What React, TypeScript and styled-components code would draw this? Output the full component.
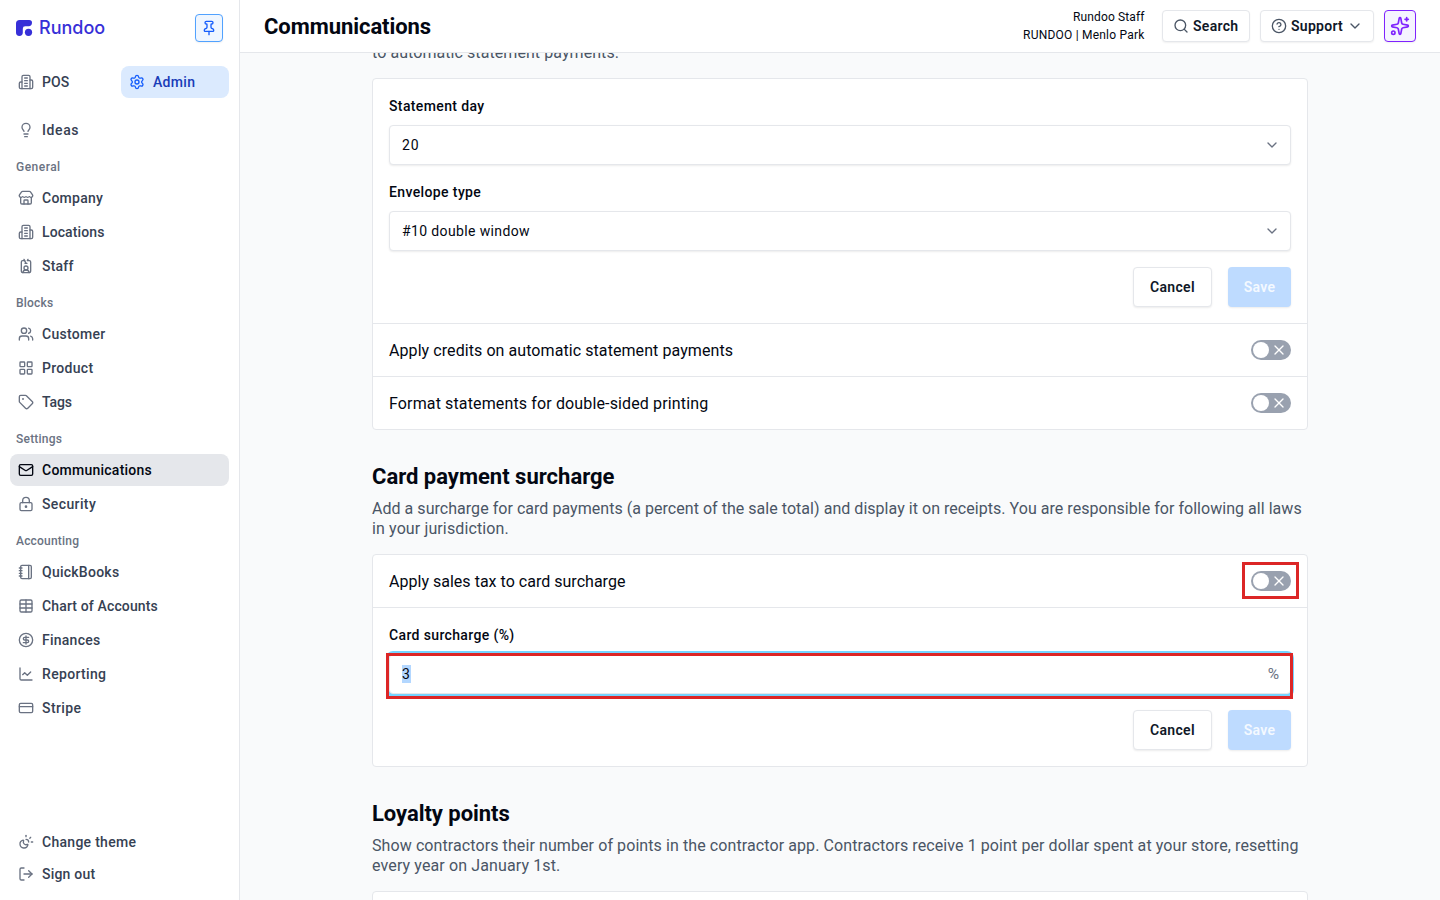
import React from "react";
import styled, { createGlobalStyle, css } from "styled-components";
import {
  ChartLine,
  ChevronDown,
  CircleDollarSign,
  CircleQuestionMark,
  CreditCard,
  IdCardLanyard,
  LayoutGrid,
  Lightbulb,
  LockKeyhole,
  LogOut,
  Mail,
  Notebook,
  Pin,
  Search,
  Settings,
  Sparkles,
  Store,
  SunMoon,
  Table,
  Tag,
  Users,
  X,
} from "lucide-react";

const GlobalStyle = createGlobalStyle`
  *, *::before, *::after { box-sizing: border-box; }
  html, body, #root { height: 100%; }
  body {
    margin: 0;
    overflow: hidden;
    font-family: Roboto, "Liberation Sans", sans-serif;
    font-size: 14px;
    color: #030712;
    background: #f9fafb;
  }
  h1, h2, p { margin: 0; }
  button, input { font: inherit; color: inherit; }
  svg { flex: none; display: block; }
`;

/* Text with its own tracking, in pixels. */
const Tracked = styled.span<{ $ls?: number }>`
  letter-spacing: ${(p) => p.$ls ?? 0}px;
  white-space: nowrap;
`;

const Shell = styled.div`
  display: flex;
  height: 900px;
  width: 1440px;
`;

/* ---------- sidebar ---------- */

const Sidebar = styled.aside`
  width: 240px;
  flex: none;
  display: flex;
  flex-direction: column;
  padding: 14px 10px 10px;
  background: #fff;
  border-right: 1px solid #e5e7eb;
`;

const Brand = styled.div`
  display: flex;
  align-items: center;
  justify-content: space-between;
  height: 28px;
  padding: 0 6px;
  margin-bottom: 24px;
`;

const Logo = styled.div`
  display: flex;
  align-items: center;
  gap: 6px;
  color: #3730d8;
  font-family: Inter, sans-serif;
  font-size: 18px;
  font-weight: 500;
  line-height: 28px;
`;

const PinButton = styled.button`
  display: grid;
  place-items: center;
  width: 28px;
  height: 28px;
  padding: 0;
  color: #155dfc;
  background: #eff6ff;
  border: 1px solid #51a2ff;
  border-radius: 4px;
  box-shadow: 0 1px 2px rgba(0, 0, 0, 0.06);
`;

const ModeSwitch = styled.div`
  display: grid;
  grid-template-columns: 1fr 108px;
  margin-bottom: 16px;
`;

type Tone = "plain" | "current" | "mode";

const NavItem = styled.a<{ $tone?: Tone }>`
  display: flex;
  align-items: center;
  gap: 8px;
  height: 32px;
  padding: 0 8px;
  border-radius: 8px;
  font-weight: 500;
  line-height: 20px;
  color: #364153;
  svg { color: #6a7282; }
  ${(p) =>
    p.$tone === "current" &&
    css`
      background: #e5e7eb;
      color: #030712;
      svg { color: #030712; }
    `}
  ${(p) =>
    p.$tone === "mode" &&
    css`
      background: #dbeafe;
      color: #193cb8;
      svg { color: #155dfc; }
    `}
`;

const NavGroup = styled.nav`
  display: flex;
  flex-direction: column;
  gap: 2px;
`;

const GroupLabel = styled.div`
  height: 36px;
  padding: 13px 6px 7px;
  font-size: 12px;
  font-weight: 500;
  line-height: 16px;
  color: #6a7282;
`;

const SidebarFooter = styled.div`
  margin-top: auto;
`;

/* ---------- header ---------- */

const Main = styled.main`
  flex: 1;
  min-width: 0;
  display: flex;
  flex-direction: column;
`;

const Header = styled.header`
  flex: none;
  display: flex;
  align-items: center;
  justify-content: space-between;
  height: 53px;
  padding: 0 24px;
  background: #fff;
  border-bottom: 1px solid #e5e7eb;
`;

const PageTitle = styled.h1`
  padding-top: 2px;
  font-size: 22px;
  font-weight: 700;
  line-height: 28px;
`;

const HeaderActions = styled.div`
  display: flex;
  align-items: center;
  gap: 10px;
`;

const Account = styled.div`
  display: flex;
  flex-direction: column;
  align-items: flex-end;
  margin-right: 7.5px;
  font-size: 12px;
  line-height: 18px;
`;

const HeaderButton = styled.button<{ $width: number; $accent?: boolean }>`
  display: flex;
  align-items: center;
  justify-content: ${(p) => (p.$accent ? "center" : "flex-start")};
  gap: 4px;
  width: ${(p) => p.$width}px;
  height: 32px;
  padding: ${(p) => (p.$accent ? 0 : "0 10px")};
  font-weight: 600;
  color: #101828;
  background: ${(p) => (p.$accent ? "#f5f3ff" : "#fff")};
  border: 1px solid ${(p) => (p.$accent ? "#7f22fe" : "#e5e7eb")};
  border-radius: 4px;
  box-shadow: 0 1px 2px rgba(0, 0, 0, 0.06);
  svg { color: ${(p) => (p.$accent ? "#7f22fe" : "#4a5565")}; }
  svg:last-child:not(:first-child) { margin-left: auto; margin-right: 1px; }
`;

/* ---------- content ---------- */

const Content = styled.div`
  flex: 1;
  min-height: 0;
  overflow: hidden;
`;

const Column = styled.div`
  width: 936px;
  margin: -10px auto 0;
  display: flex;
  flex-direction: column;
`;

const Section = styled.section`
  margin-bottom: 32px;
`;

const SectionTitle = styled.h2`
  margin-bottom: 8px;
  font-size: 22px;
  font-weight: 700;
  line-height: 29px;
`;

const Description = styled.p`
  margin-bottom: 15px;
  font-size: 16px;
  line-height: 20px;
  color: #4a5565;
  ${Tracked} { display: block; }
`;

const Card = styled.div`
  background: #fff;
  border: 1px solid #e5e7eb;
  border-radius: 4px;
  > * + * { border-top: 1px solid #e5e7eb; }
`;

const Form = styled.div`
  display: flex;
  flex-direction: column;
  gap: 16px;
  padding: 16px;
`;

const Field = styled.label`
  display: flex;
  flex-direction: column;
  gap: 8px;
  font-weight: 500;
  line-height: 22px;
`;

const Control = styled.div<{ $focused?: boolean }>`
  position: relative;
  display: flex;
  align-items: center;
  justify-content: space-between;
  height: 40px;
  padding: 0 10px 0 12px;
  font-weight: 400;
  line-height: 18px;
  background: #fff;
  border: 1px solid #e5e7eb;
  border-radius: 4px;
  box-shadow: ${(p) => (p.$focused ? "0 0 0 3px #74d4ff" : "0 1px 2px rgba(0, 0, 0, 0.08)")};
  svg { color: #6a7282; }
`;

const Selected = styled.span`
  width: 9px;
  background: #b3d7ff;
`;

const Suffix = styled.span`
  margin-right: 1px;
  font-size: 15.5px;
  color: #6a7282;
`;

const Buttons = styled.div`
  display: flex;
  justify-content: flex-end;
  gap: 16px;
`;

const Button = styled.button<{ $primary?: boolean }>`
  width: ${(p) => (p.$primary ? 63 : 79)}px;
  height: 40px;
  padding: 0;
  font-weight: 600;
  color: ${(p) => (p.$primary ? "rgba(255, 255, 255, 0.85)" : "#101828")};
  background: ${(p) => (p.$primary ? "#bedbff" : "#fff")};
  border: ${(p) => (p.$primary ? "none" : "1px solid #e5e7eb")};
  border-radius: 4px;
  box-shadow: 0 1px 2px rgba(0, 0, 0, 0.08);
`;

const ToggleRow = styled.div`
  display: flex;
  align-items: center;
  justify-content: space-between;
  height: 53px;
  padding: 0 16px;
  font-size: 16px;
  &:first-child { height: 52px; }
`;

const ToggleSlot = styled.div`
  position: relative;
`;

const Toggle = styled.div`
  display: flex;
  align-items: center;
  justify-content: space-between;
  width: 40px;
  height: 20px;
  padding: 0 4px 0 2px;
  border-radius: 10px;
  background: #99a1af;
  color: #fff;
`;

const Knob = styled.span`
  width: 16px;
  height: 16px;
  border-radius: 50%;
  background: #fff;
`;

/* Red outline laid over a control to call it out. */
const Callout = styled.span<{ $inset: string }>`
  position: absolute;
  inset: ${(p) => p.$inset};
  border: 3px solid #dc2626;
  pointer-events: none;
`;

const Building = () => (
  <svg width="16" height="16" viewBox="0 0 24 24" fill="none" stroke="currentColor" strokeWidth="2" strokeLinecap="round" strokeLinejoin="round">
    <path d="M6 22V4a2 2 0 0 1 2-2h8a2 2 0 0 1 2 2v18Z" />
    <path d="M6 12H4a2 2 0 0 0-2 2v6a2 2 0 0 0 2 2h2" />
    <path d="M18 9h2a2 2 0 0 1 2 2v9a2 2 0 0 1-2 2h-2" />
    <path d="M10 6h4M10 10h4M10 14h4M10 18h4" />
  </svg>
);

const LogoMark = () => (
  <svg width="17" height="16" viewBox="0 0 17 16" fill="currentColor">
    <path d="M3.600 0h9.600a2.800 2.800 0 0 1 2.800 2.800c0 2.200-1.300 3.500-3.300 3.500H9.200a2.400 2.400 0 0 0-2.400 2.400v3.900A3.400 3.400 0 0 1 0 12.600V3.600A3.600 3.600 0 0 1 3.600 0Z" />
    <circle cx="12.500" cy="12.300" r="3.600" />
  </svg>
);

type IconType = React.ComponentType<{ size?: number }>;
type Item = { icon: IconType; label: string; ls: number; tone?: Tone };

const groups: { label: string; ls: number; items: Item[] }[] = [
  {
    label: "General",
    ls: 0.48,
    items: [
      { icon: Store, label: "Company", ls: 0.27 },
      { icon: Building, label: "Locations", ls: 0.1 },
      { icon: IdCardLanyard, label: "Staff", ls: 0.2 },
    ],
  },
  {
    label: "Blocks",
    ls: 0.22,
    items: [
      { icon: Users, label: "Customer", ls: 0.27 },
      { icon: LayoutGrid, label: "Product", ls: 0.3 },
      { icon: Tag, label: "Tags", ls: -0.08 },
    ],
  },
  {
    label: "Settings",
    ls: 0.22,
    items: [
      { icon: Mail, label: "Communications", ls: 0.24, tone: "current" },
      { icon: LockKeyhole, label: "Security", ls: 0.38 },
    ],
  },
  {
    label: "Accounting",
    ls: 0.2,
    items: [
      { icon: Notebook, label: "QuickBooks", ls: 0.25 },
      { icon: Table, label: "Chart of Accounts", ls: 0.14 },
      { icon: CircleDollarSign, label: "Finances", ls: 0.25 },
      { icon: ChartLine, label: "Reporting", ls: 0.32 },
      { icon: CreditCard, label: "Stripe", ls: 0.4 },
    ],
  },
];

const NavLink = ({ icon: Icon, label, ls, tone }: Item) => (
  <NavItem $tone={tone}>
    <Icon size={16} />
    <Tracked $ls={ls}>{label}</Tracked>
  </NavItem>
);

const FormButtons = () => (
  <Buttons>
    <Button><Tracked $ls={0.32}>Cancel</Tracked></Button>
    <Button $primary><Tracked $ls={0.32}>Save</Tracked></Button>
  </Buttons>
);

const Switch = ({ marked }: { marked?: boolean }) => (
  <ToggleSlot>
    <Toggle>
      <Knob />
      <X size={16} />
    </Toggle>
    {marked && <Callout $inset="-9px -8px -8px -9px" />}
  </ToggleSlot>
);

export default function App() {
  return (
    <>
      <GlobalStyle />
      <Shell>
        <Sidebar>
          <Brand>
            <Logo>
              <LogoMark />
              <Tracked>Rundoo</Tracked>
            </Logo>
            <PinButton aria-label="Pin sidebar"><Pin size={16} /></PinButton>
          </Brand>
          <ModeSwitch>
            <NavLink icon={Building} label="POS" ls={0.1} />
            <NavLink icon={Settings} label="Admin" ls={0.3} tone="mode" />
          </ModeSwitch>
          <NavLink icon={Lightbulb} label="Ideas" ls={0.6} />
          {groups.map((g) => (
            <React.Fragment key={g.label}>
              <GroupLabel><Tracked $ls={g.ls}>{g.label}</Tracked></GroupLabel>
              <NavGroup>
                {g.items.map((item) => <NavLink key={item.label} {...item} />)}
              </NavGroup>
            </React.Fragment>
          ))}
          <SidebarFooter>
            <NavLink icon={SunMoon} label="Change theme" ls={0.28} />
            <NavLink icon={LogOut} label="Sign out" ls={0.2} />
          </SidebarFooter>
        </Sidebar>

        <Main>
          <Header>
            <PageTitle><Tracked $ls={-0.06}>Communications</Tracked></PageTitle>
            <HeaderActions>
              <Account>
                <Tracked $ls={0.12}>Rundoo Staff</Tracked>
                <Tracked $ls={0.21}>RUNDOO | Menlo Park</Tracked>
              </Account>
              <HeaderButton $width={88}>
                <Search size={16} />
                <Tracked $ls={0.3}>Search</Tracked>
              </HeaderButton>
              <HeaderButton $width={114}>
                <CircleQuestionMark size={16} />
                <Tracked $ls={0.27}>Support</Tracked>
                <ChevronDown size={16} />
              </HeaderButton>
              <HeaderButton $width={32} $accent aria-label="Assistant">
                <Sparkles size={20} />
              </HeaderButton>
            </HeaderActions>
          </Header>

          <Content>
            <Column>
              <Section>
                <Description>
                  <Tracked $ls={0.07}>to automatic statement payments.</Tracked>
                </Description>
                <Card>
                  <Form>
                    <Field>
                      <Tracked $ls={0.38}>Statement day</Tracked>
                      <Control>
                        <Tracked $ls={0.8}>20</Tracked>
                        <ChevronDown size={16} />
                      </Control>
                    </Field>
                    <Field>
                      <Tracked $ls={0.38}>Envelope type</Tracked>
                      <Control>
                        <Tracked $ls={0.37}>#10 double window</Tracked>
                        <ChevronDown size={16} />
                      </Control>
                    </Field>
                    <FormButtons />
                  </Form>
                  <ToggleRow>
                    <Tracked $ls={0.075}>Apply credits on automatic statement payments</Tracked>
                    <Switch />
                  </ToggleRow>
                  <ToggleRow>
                    <Tracked $ls={0.135}>Format statements for double-sided printing</Tracked>
                    <Switch />
                  </ToggleRow>
                </Card>
              </Section>

              <Section>
                <SectionTitle><Tracked>Card payment surcharge</Tracked></SectionTitle>
                <Description>
                  <Tracked $ls={0.037}>
                    Add a surcharge for card payments (a percent of the sale total) and display it on receipts. You are responsible for following all laws
                  </Tracked>
                  <Tracked $ls={0.12}>in your jurisdiction.</Tracked>
                </Description>
                <Card>
                  <ToggleRow>
                    <Tracked $ls={0.02}>Apply sales tax to card surcharge</Tracked>
                    <Switch marked />
                  </ToggleRow>
                  <Form>
                    <Field>
                      <Tracked $ls={0.36}>Card surcharge (%)</Tracked>
                      <Control $focused>
                        <Selected>3</Selected>
                        <Suffix>%</Suffix>
                        <Callout $inset="-2px -3px -6px -4px" />
                      </Control>
                    </Field>
                    <FormButtons />
                  </Form>
                </Card>
              </Section>

              <Section>
                <SectionTitle><Tracked $ls={-0.04}>Loyalty points</Tracked></SectionTitle>
                <Description>
                  <Tracked $ls={0.092}>
                    Show contractors their number of points in the contractor app. Contractors receive 1 point per dollar spent at your store, resetting
                  </Tracked>
                  <Tracked $ls={0.12}>every year on January 1st.</Tracked>
                </Description>
                <Card>
                  <ToggleRow />
                </Card>
              </Section>
            </Column>
          </Content>
        </Main>
      </Shell>
    </>
  );
}
